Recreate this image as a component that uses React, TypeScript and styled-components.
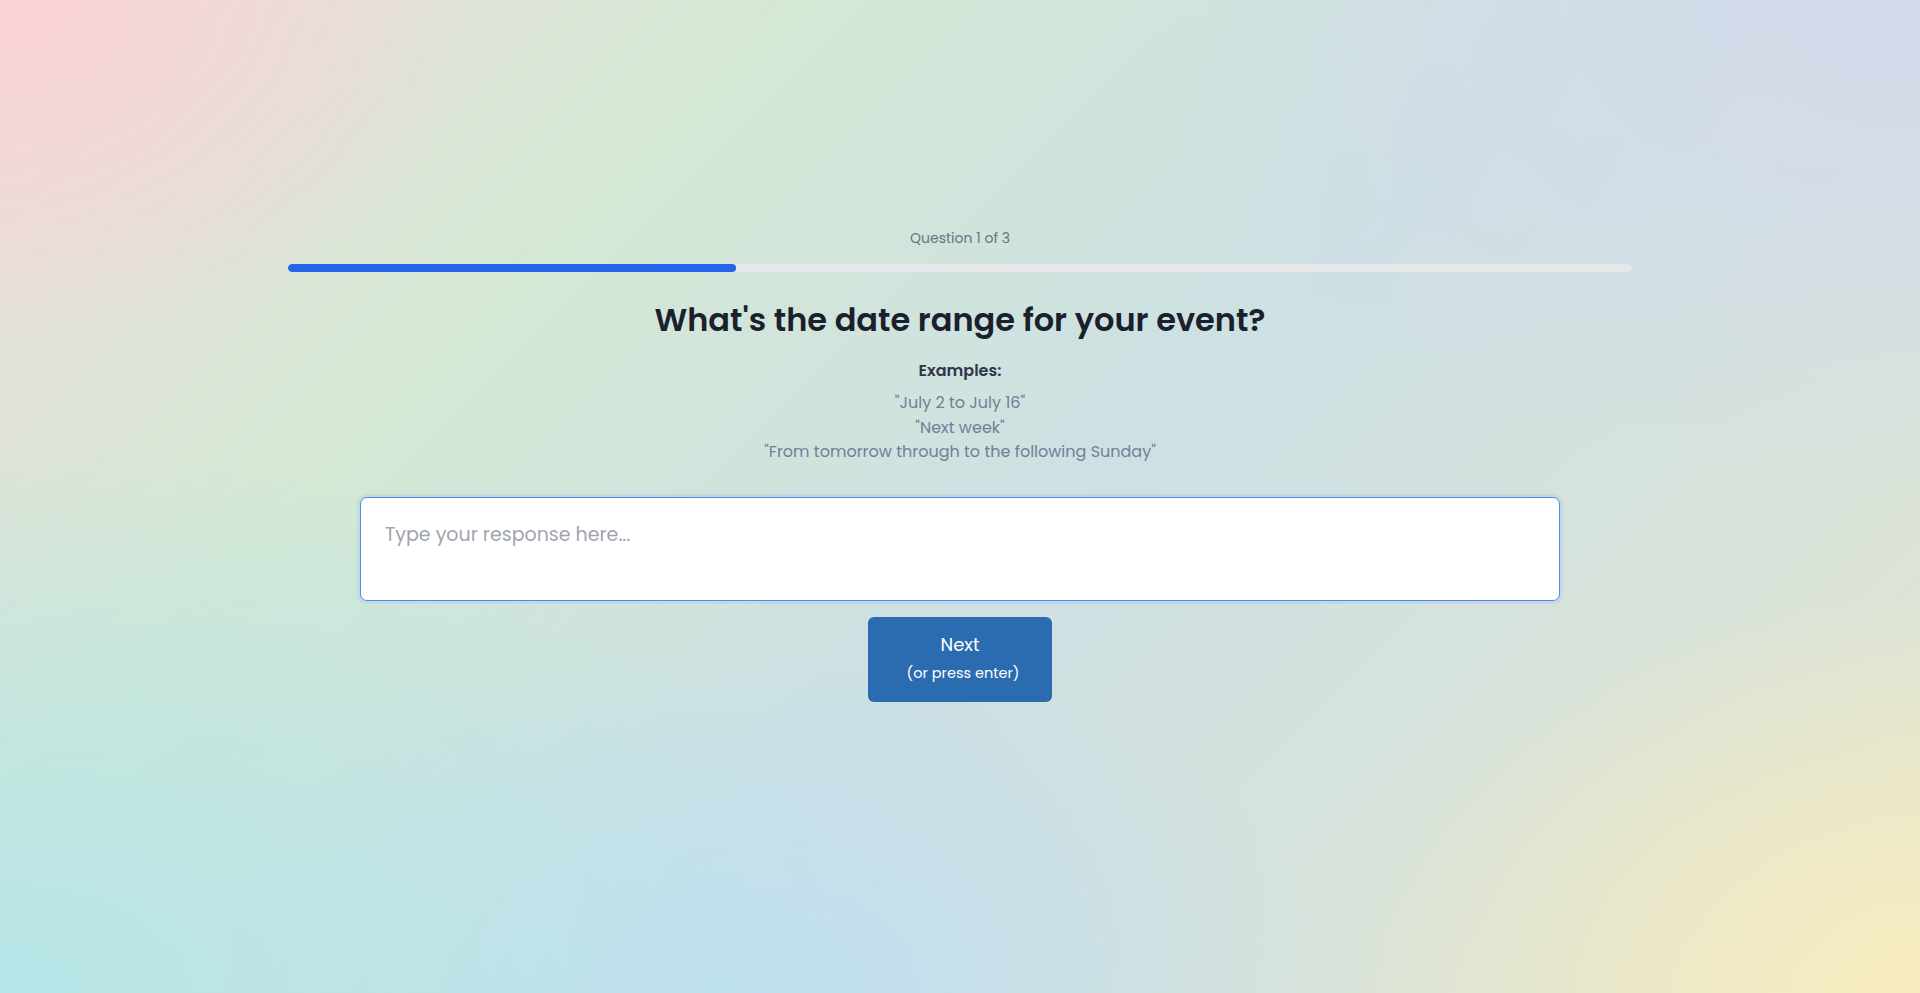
import React from 'react';
import styled, { createGlobalStyle } from 'styled-components';

const GlobalStyle = createGlobalStyle`
  html, body {
    margin: 0;
    padding: 0;
    height: 100%;
  }
  body {
    font-family: 'Poppins', 'Open Sans', sans-serif;
    -webkit-font-smoothing: antialiased;
  }
  #root {
    min-height: 100%;
  }
  * {
    box-sizing: border-box;
  }
`;

const Page = styled.div`
  min-height: 100vh;
  display: flex;
  flex-direction: column;
  align-items: center;
  padding-top: 228px;
  background:
    radial-gradient(ellipse 45% 55% at 0% 100%, rgba(182, 229, 232, 1) 0%, rgba(182, 229, 232, 0) 100%),
    radial-gradient(ellipse 40% 50% at 100% 0%, rgba(212, 218, 236, 1) 0%, rgba(212, 218, 236, 0) 100%),
    radial-gradient(ellipse 30% 35% at 40% 100%, rgba(192, 223, 240, 1) 0%, rgba(192, 223, 240, 0) 100%),
    radial-gradient(ellipse 30% 40% at 100% 100%, rgba(248, 236, 190, 1) 0%, rgba(248, 236, 190, 0) 100%),
    radial-gradient(ellipse 25% 35% at 0% 0%, rgba(250, 210, 214, 1) 0%, rgba(250, 210, 214, 0) 100%),
    linear-gradient(135deg, #ecdcd8 0%, #d3e8d5 28%, #cde0e4 55%, #e3e5d0 100%);
`;

const Wrapper = styled.div`
  width: 70%;
  display: flex;
  flex-direction: column;
  align-items: center;
`;

const Counter = styled.div`
  font-size: 14px;
  line-height: 20px;
  color: #6b7280;
  margin-bottom: 16px;
`;

const Track = styled.div`
  width: 100%;
  height: 8px;
  border-radius: 4px;
  background: #e5e7eb;
  overflow: hidden;
`;

const Fill = styled.div`
  height: 100%;
  border-radius: 4px;
  background: #2563eb;
`;

const Title = styled.h1`
  margin: 28px 0 0;
  font-size: 32px;
  line-height: 40px;
  font-weight: 600;
  color: #1a202c;
`;

const Examples = styled.div`
  margin-top: 19px;
  display: flex;
  flex-direction: column;
  align-items: center;
`;

const ExamplesLabel = styled.div`
  font-size: 16px;
  line-height: 24px;
  font-weight: 600;
  color: #2d3748;
  margin-bottom: 8px;
`;

const ExampleLine = styled.div`
  font-size: 16px;
  line-height: 24.5px;
  color: #718096;
`;

const Response = styled.textarea`
  margin-top: 32px;
  width: 1200px;
  height: 104px;
  padding: 23px 24px;
  border: 1px solid #4a8af4;
  border-radius: 7px;
  background: #ffffff;
  box-shadow: 0 0 0 3px rgba(96, 150, 230, 0.12);
  font-family: inherit;
  font-size: 19px;
  line-height: 28px;
  color: #1a202c;
  resize: none;
  outline: none;

  &::placeholder {
    color: #a0a4b0;
  }
`;

const NextButton = styled.button`
  margin-top: 16px;
  width: 184px;
  height: 85px;
  border: none;
  border-radius: 6px;
  background: #2b6cb0;
  color: #ffffff;
  font-family: inherit;
  display: flex;
  flex-direction: column;
  align-items: center;
  justify-content: center;
  cursor: pointer;
`;

const ButtonMain = styled.span`
  font-size: 18px;
  line-height: 24px;
`;

const ButtonHint = styled.span`
  margin-top: 4px;
  padding-left: 6px;
  font-size: 14.5px;
  line-height: 24px;
`;

const examples = [
  '"July 2 to July 16"',
  '"Next week"',
  '"From tomorrow through to the following Sunday"',
];

export default function App() {
  const current = 1;
  const total = 3;
  return (
    <>
      <GlobalStyle />
      <Page>
        <Wrapper>
          <Counter>
            Question {current} of {total}
          </Counter>
          <Track>
            <Fill style={{ width: `${(current / total) * 100}%` }} />
          </Track>
          <Title>What's the date range for your event?</Title>
          <Examples>
            <ExamplesLabel>Examples:</ExamplesLabel>
            {examples.map(e => (
              <ExampleLine key={e}>{e}</ExampleLine>
            ))}
          </Examples>
          <Response placeholder="Type your response here..." autoFocus />
          <NextButton type="button">
            <ButtonMain>Next</ButtonMain>
            <ButtonHint>(or press enter)</ButtonHint>
          </NextButton>
        </Wrapper>
      </Page>
    </>
  );
}
